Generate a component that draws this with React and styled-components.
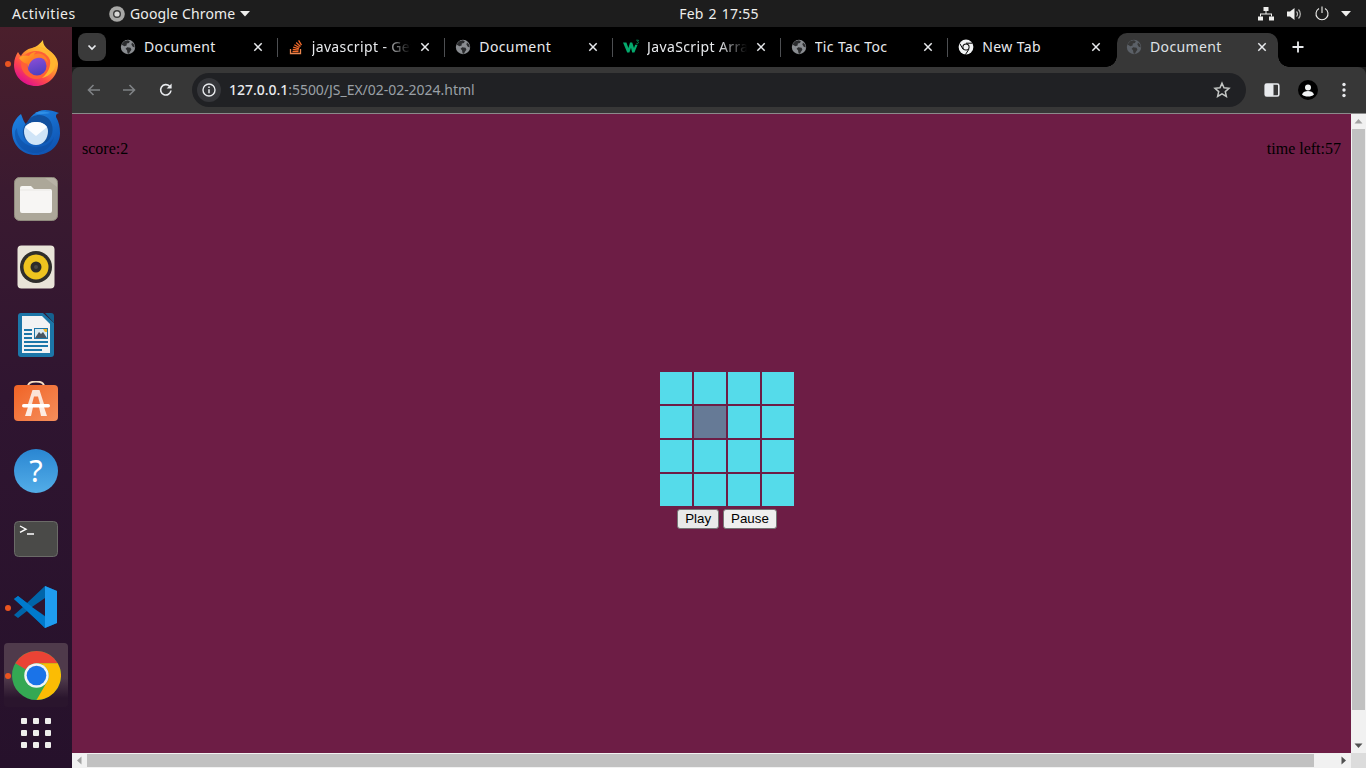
import React from "react";
import styled, { createGlobalStyle } from "styled-components";

const Global = createGlobalStyle`
  html, body { margin: 0; padding: 0; overflow: hidden; background: #1d1d1d; }
  #root { width: 1366px; height: 768px; }
  * { box-sizing: border-box; }
`;

const Screen = styled.div`
  width: 1366px; height: 768px; display: flex; flex-direction: column; overflow: hidden;
  font-family: "Noto Sans", sans-serif;
`;
const TopBar = styled.header`
  height: 27px; flex: none; background: #1d1d1d; color: #eeeeec; display: grid;
  grid-template-columns: 1fr auto 1fr; align-items: center; font-size: 14px; padding: 0 12px;
`;
const TopLeft = styled.div`display: flex; align-items: center;`;
const Activities = styled.span`width: 97px; letter-spacing: .55px;`;
const AppMenu = styled.span`display: flex; align-items: center; gap: 5px; letter-spacing: .15px;`;
const Clock = styled.span`word-spacing: 1px; letter-spacing: .25px; margin-left: 72px;`;
const TopRight = styled.div`display: flex; align-items: center; justify-content: flex-end; gap: 12px; padding-right: 3px;`;
const Body = styled.div`flex: 1; display: flex; min-height: 0;`;
const Dock = styled.nav`
  width: 72px; flex: none; display: flex; flex-direction: column; align-items: center; padding-top: 2px;
  background: linear-gradient(180deg, #4b1f2c 0%, #3a1a30 22%, #2f1530 50%, #26112b 100%);
`;
const DockItem = styled.div`
  position: relative; width: 64px; height: 68px; flex: none; display: flex; align-items: center; justify-content: center;
`;
const ActiveGlow = styled.div`
  position: absolute; inset: 2px 0 2px 0; border-radius: 4px;
  background: linear-gradient(180deg, #4f3a4b 0%, #4f3a4b 55%, #2a152d 86%);
`;
const Dot = styled.i`
  position: absolute; left: 1px; top: 32px; width: 6px; height: 6px; border-radius: 50%; background: #e95420;
`;
const IconWrap = styled.div`position: relative; display: flex;`;
const Apps = styled.div`
  display: grid; grid-template-columns: repeat(3, 6px); gap: 6px; padding-top: 9px;
`;
const AppDot = styled.i`width: 6px; height: 6px; border-radius: 1px; background: #eeeeec;`;
const Chrome = styled.div`flex: 1; min-width: 0; display: flex; flex-direction: column;`;
const TabStrip = styled.div`height: 40px; flex: none; background: #000; display: flex; align-items: flex-start; padding: 6px 0 0 6px;`;
const TabSearch = styled.button`
  width: 28px; height: 28px; border: 0; padding: 0; border-radius: 8px; background: #3a3a3a; margin-right: 4px;
  display: flex; align-items: center; justify-content: center; flex: none;
`;
const Tab = styled.div`
  position: relative; width: 167.67px; height: 34px; flex: none; display: flex; align-items: center;
  padding: 0 ${p => (p.$active ? 16 : 14)}px 6px 10px; gap: 8px; color: ${p => (p.$active ? "#dfe1e5" : "#e8eaed")}; font-size: 14px;
  &::after {
    content: ""; position: absolute; right: 0; top: 5px; width: 1px; height: 19px;
    background: ${p => (p.$sep ? "#4d4f52" : "transparent")};
  }
`;
const ActiveBg = styled.div`
  position: absolute; left: 1px; right: 6px; top: 0; bottom: 0; background: #373737; border-radius: 10px 10px 0 0;
  &::before, &::after { content: ""; position: absolute; bottom: 0; width: 11px; height: 11px; }
  &::before { left: -11px; background: radial-gradient(circle at 0 0, transparent 10.5px, #373737 11px); }
  &::after { right: -11px; background: radial-gradient(circle at 100% 0, transparent 10.5px, #373737 11px); }
`;
const Favicon = styled.span`position: relative; display: flex; width: 16px; height: 16px; flex: none;`;
const TabTitle = styled.span`
  position: relative; flex: 1; min-width: 0; white-space: nowrap; overflow: hidden; letter-spacing: .38px; margin-top: -2px;
  ${p => p.$fade && "-webkit-mask-image: linear-gradient(90deg,#000 72%,transparent 100%); mask-image: linear-gradient(90deg,#000 72%,transparent 100%);"}
`;
const CloseBox = styled.span`position: relative; display: flex; width: 12px; height: 12px; flex: none;`;
const NewTab = styled.span`display: flex; margin: 7px 0 0 7px;`;
const Toolbar = styled.div`
  height: 46px; flex: none; background: #373737; border-radius: 8px 8px 0 0; display: flex; align-items: center;
  padding: 0 0 0 14px;
`;
const NavIcon = styled.span`display: flex; width: 16px; height: 16px; margin-right: ${p => p.$mr}px;`;
const Omnibox = styled.div`
  width: 1054px; height: 34px; flex: none; background: #202124; border-radius: 17px; display: flex; align-items: center;
  padding: 0 15px 0 5px; font-size: 14px; margin-right: 18px;
`;
const InfoChip = styled.span`
  width: 24px; height: 24px; border-radius: 50%; background: #35363a; display: flex; align-items: center; justify-content: center; margin-right: 8px;
`;
const Host = styled.span`color: #e8eaed; font-weight: 500;`;
const Path = styled.span`color: #9aa0a6;`;
const Url = styled.span`flex: 1; letter-spacing: -.03px; margin-top: -2px;`;
const ToolIcons = styled.div`display: flex; align-items: center; gap: 18px;`;
const Page = styled.main`
  flex: 1; min-height: 0; display: grid; grid-template-columns: 1fr 15px; grid-template-rows: 1fr 15px;
  background: #6d1d45; border-top: 1px solid #8b8b8b;
`;
const Content = styled.div`
  min-width: 0; min-height: 0; color: #000; font-family: "Liberation Serif", serif; font-size: 16px; padding: 26px 10px 0;
`;
const Scores = styled.div`display: flex; justify-content: space-between; line-height: 18px; height: 18px;`;
const Game = styled.div`margin: 214px 0 0 578px; width: 134px; display: flex; flex-direction: column; align-items: center;`;
const Board = styled.div`display: grid; grid-template-columns: repeat(4, 32px); grid-auto-rows: 32px; gap: 2px;`;
const Cell = styled.div`background: ${p => (p.$hit ? "#667a96" : "#55dbea")};`;
const Controls = styled.div`display: flex; gap: 4px; margin-top: 3px;`;
const Btn = styled.button`
  height: 20px; padding: 0 7px; background: ${p => (p.$hover ? "#e9e9e9" : "#efefef")}; border: 1px solid #767676; border-radius: 3px;
  font: 13.33px "Liberation Sans", sans-serif; color: #000; line-height: 16px;
`;
const VScroll = styled.div`background: #f1f1f1; display: flex; flex-direction: column; align-items: center;`;
const HScroll = styled.div`background: #f1f1f1; display: flex; align-items: center;`;
const ArrowBox = styled.span`width: 15px; height: 15px; flex: none; display: flex; align-items: center; justify-content: center;`;
const VThumb = styled.div`width: 13px; height: 581px; background: #c1c1c1; flex: none;`;
const HThumb = styled.div`height: 13px; width: 1227px; background: #c1c1c1; flex: none;`;
const Spacer = styled.div`flex: 1;`;
const Corner = styled.div`background: #dcdcdc;`;

const Tri = ({ d, fill = "#505050" }) => (
  <svg width="15" height="15" viewBox="0 0 15 15"><path d={d} fill={fill} /></svg>
);

const Globe = ({ dim }) => (
  <svg width="16" height="16" viewBox="0 0 16 16">
    <circle cx="8" cy="8" r="7.2" fill={dim ? "#5b6067" : "#8a8d91"} />
    <path d="M4.2 2.2 7.8 1.2 9.8 2.2 9 4 6.8 4.6 6.6 6.4 4.4 7.2 1.4 5.4ZM7.2 8.2 10.6 8.8 11.4 10.8 9.8 13 9 14.8 7.6 14.6 7 11.2 5.6 9.8ZM12 3.6 14 5.6 14.8 8.6 12.8 7.8 11.4 5.6Z" fill={dim ? "#373737" : "#2a2b2d"} />
  </svg>
);
const SO = () => (
  <svg width="16" height="16" viewBox="0 0 16 16">
    <path d="M2.5 10v4.5h10V10" fill="none" stroke="#e9854e" strokeWidth="1.3" />
    <path d="M4.5 12.6h6M4.7 10.5l5.9.6M5.2 8.2l5.7 1.6M6.3 5.8l5.2 2.8M8.2 3.5l4.3 3.9M10.6 1.4l2.9 4.7" stroke="#f2692a" strokeWidth="1.3" fill="none" />
  </svg>
);
const W3 = () => (
  <svg width="16" height="16" viewBox="0 0 16 16">
    <path d="M0 3.5h3.4l2 5.6 1.6-5.6h2.2l1.8 5.6 1.2-3.4h2.4L11.4 13.5H9.2L8 8.8 6.4 13.5H4.2Z" fill="#04aa6d" />
    <path d="M13.2 1.2h2.2v.6l-.9.8c.7.1 1 .4 1 .9 0 .6-.5 1-1.2 1-.4 0-.8-.1-1-.3" fill="none" stroke="#04aa6d" strokeWidth=".7" />
  </svg>
);
const ChromeMono = () => (
  <svg width="16" height="16" viewBox="0 0 16 16">
    <circle cx="8" cy="8" r="7.4" fill="#f1f3f4" />
    <path d="M8 4.2h6.4M5 10.2 1.8 4.6M10.8 10.4 7.4 15.6" stroke="#000" strokeWidth="1" />
    <circle cx="8" cy="8" r="3.6" fill="#000" />
    <circle cx="8" cy="8" r="2.6" fill="#f1f3f4" />
  </svg>
);
const X = () => (
  <svg width="12" height="12" viewBox="0 0 12 12"><path d="M2.3 2.3l7.4 7.4M9.7 2.3l-7.4 7.4" stroke="#e8eaed" strokeWidth="1.5" /></svg>
);

const Firefox = () => (
  <svg width="46" height="46" viewBox="0 0 46 46">
    <defs>
      <linearGradient id="ff1" x1=".85" y1=".1" x2=".3" y2=".95">
        <stop offset="0" stopColor="#ffd43a" /><stop offset=".42" stopColor="#ff9a2e" />
        <stop offset=".72" stopColor="#ff4a4a" /><stop offset="1" stopColor="#e31587" />
      </linearGradient>
      <linearGradient id="ff2" x1=".3" y1="0" x2=".6" y2="1">
        <stop offset="0" stopColor="#8f4fd8" /><stop offset="1" stopColor="#4b3fbf" />
      </linearGradient>
      <linearGradient id="ff3" x1="0" y1="0" x2="1" y2="1">
        <stop offset="0" stopColor="#ffb52a" /><stop offset="1" stopColor="#ff6a1f" />
      </linearGradient>
    </defs>
    <path d="M30 0C30 5 33 8 37 11 42 15 45 19 45 24 45 36 35 46 23 46 11 46 1 37 1 25 1 19 3 15 5 12 6 14 7 15 8 16 10 12 14 9 19 8 23 7 27 4 30 0Z" fill="url(#ff1)" />
    <path d="M8 24C8 16 15 11 23 11 31 11 38 17 38 25 38 33 31 39 23 39 15 39 8 32 8 24Z" fill="#ff5f36" />
    <path d="M15 11C21 5 32 8 36 15 39 22 37 32 29 38 38 36 44 28 43 20 40 12 33 7 25 7 21 7 18 8 15 11Z" fill="#ffb52e" />
    <circle cx="24" cy="26" r="9.500" fill="url(#ff2)" />
    <path d="M15 28C13 20 18 14 25 13.500 31 13.500 34.500 18 35 23 32 18.500 28 17 24 18 19 19 16 23 15 28Z" fill="#ff7f2a" />
    <path d="M6 18C9 15 13 15 16 16 17 14 20 12 23 12 21 14 20 15 22 17 18 18 16 20 16 24 12 24 8 21 6 18Z" fill="url(#ff3)" />
  </svg>
);
const Thunderbird = () => (
  <svg width="48" height="47" viewBox="0 0 48 47">
    <defs>
      <linearGradient id="tb1" x1="0" y1="0" x2=".6" y2="1">
        <stop offset="0" stopColor="#1f86e6" /><stop offset="1" stopColor="#0f55b4" />
      </linearGradient>
    </defs>
    <path d="M9 6C11 11 12 15 15 17 17 9 24 2 33 2 38 2 42 3 47 5 44 6 44 7 44 9 47 14 48 19 48 25 48 37 38 47 24 47 10 47 0 37 0 23 0 16 4 10 9 6Z" fill="url(#tb1)" />
    <path d="M5 20C5 30 13 39 25 39 33 39 39 35 42 29 40 39 32 45 23 45 11 45 2 35 3 23Z" fill="#0c4da3" opacity=".55" />
    <path d="M16 13C20 6 31 5 37 11 42 17 42 27 36 33 30 38 19 38 13 31 9 25 11 18 16 13Z" fill="#11509f" />
    <path d="M12 23C12 17 18 14 24 14 30 14 36 17 36 23 36 31 31 37 24 37 17 37 12 31 12 23Z" fill="#cfe4f7" />
    <path d="M13 19C17 15 20 14 24 14 28 14 32 15 35 19L24 28Z" fill="#fbfdff" />
    <path d="M23 5C27 3 33 3 38 5 33 6 27 7 23 5Z" fill="#2f8fe6" />
  </svg>
);
const Files = () => (
  <svg width="44" height="44" viewBox="0 0 44 44">
    <rect x=".5" y=".5" width="43" height="43" rx="5" fill="#aca799" stroke="#8f8a7d" />
    <path d="M31 1 43 10V6a5 5 0 0 0-5-5Z" fill="#b8b3a6" />
    <path d="M6 11a2 2 0 0 1 2-2h9l3 3h16a2 2 0 0 1 2 2v20a2 2 0 0 1-2 2H8a2 2 0 0 1-2-2Z" fill="#f7f6f4" />
    <path d="M6 13h30" stroke="#e3e1dd" strokeWidth=".7" />
  </svg>
);
const Rhythmbox = () => (
  <svg width="38" height="44" viewBox="0 0 38 44">
    <rect x=".5" y=".5" width="37" height="43" rx="4" fill="#e9e4d8" />
    <circle cx="19" cy="22" r="16" fill="#2f2e2b" />
    <circle cx="19" cy="22" r="12.5" fill="#eec41f" />
    <circle cx="19" cy="22" r="5.5" fill="#2d2c29" />
    <circle cx="19" cy="22" r="2" fill="#4a4945" />
  </svg>
);
const Writer = () => (
  <svg width="36" height="44" viewBox="0 0 36 44">
    <path d="M3 0h22l11 10v31a3 3 0 0 1-3 3H3a3 3 0 0 1-3-3V3a3 3 0 0 1 3-3Z" fill="#1c76a8" />
    <path d="M27 0h6a3 3 0 0 1 3 3v7Z" fill="#15608e" />
    <path d="M4 3h20l8 8v29H4Z" fill="#f2f3f4" />
    <path d="M6 16h8v2H6ZM6 20h8v2H6ZM6 24h8v2H6ZM6 28h24v2H6ZM6 32h24v2H6ZM6 36h18v2H6Z" fill="#1c76a8" />
    <rect x="16" y="15" width="14" height="11" fill="#1c76a8" />
    <rect x="17" y="16" width="12" height="9" fill="#dce9ef" />
    <path d="M17 25l4-6 2 2 2-2 4 6Z" fill="#4a5560" />
    <path d="M25 16h4v3h-2Z" fill="#f0b429" />
  </svg>
);
const Store = () => (
  <svg width="46" height="44" viewBox="0 3 46 44">
    <defs>
      <linearGradient id="st" x1="0" y1="0" x2="1" y2="1">
        <stop offset="0" stopColor="#f16325" /><stop offset="1" stopColor="#f58f5c" />
      </linearGradient>
    </defs>
    <path d="M15 8.5C15 5 18 3.500 23 3.500s8 1.500 8 5" fill="none" stroke="#f8dfc4" strokeWidth="1.800" />
    <rect x="1" y="7" width="44" height="36" rx="4" fill="url(#st)" />
    <path d="M19.500 12h7L31 26h-4l-2-7.500h-4L19 26h-4Z" fill="#fbe3d6" />
    <path d="M15 29h5l-2 9h-6ZM26 29h5l3 9h-6Z" fill="#fdece3" />
    <rect x="9" y="26" width="28" height="3.500" rx="1.750" fill="#fff" />
  </svg>
);
const Help = () => (
  <svg width="46" height="46" viewBox="0 0 46 46">
    <defs>
      <linearGradient id="hp" x1="0" y1="0" x2="0" y2="1">
        <stop offset="0" stopColor="#2a86d2" /><stop offset="1" stopColor="#53ade8" />
      </linearGradient>
    </defs>
    <circle cx="23" cy="23" r="22" fill="url(#hp)" />
    <text x="23" y="34" textAnchor="middle" fontFamily="Noto Sans, sans-serif" fontSize="31" fill="#fff">?</text>
  </svg>
);
const Terminal = () => (
  <svg width="44" height="36" viewBox="0 0 44 36">
    <rect x=".5" y=".5" width="43" height="35" rx="4" fill="#4a4a48" stroke="#6b6b68" />
    <path d="M6 5l6 3.2-6 3.2" fill="none" stroke="#fff" strokeWidth="1.4" />
    <path d="M13 13h7" stroke="#fff" strokeWidth="1.5" />
  </svg>
);
const VSCode = () => (
  <svg width="44" height="44" viewBox="0 0 44 44">
    <path d="M31 1 43 6v32l-12 5L13 26 4 33 0 30l9-8-9-8 4-3 9 7Z" fill="#0065a9" />
    <path d="M4 11 0 14l25 23 6 6 3-9Z" fill="#007acc" />
    <path d="M31 1 43 6v32l-12 5Z" fill="#1f9cf0" />
    <path d="M31 13v18L18 22Z" fill="#2f1530" />
  </svg>
);
const ChromeLogo = ({ size = 49 }) => (
  <svg width={size} height={size} viewBox="0 0 48 48">
    <circle cx="24" cy="24" r="24" fill="#34a853" />
    <path d="M24 0a24 24 0 0 1 20.8 12H24a12 12 0 0 0-10.4 6L3.2 12A24 24 0 0 1 24 0Z" fill="#ea4335" />
    <path d="M44.8 12H24a12 12 0 0 1 10.4 18L24 48A24 24 0 0 0 44.8 12Z" fill="#fbbc04" />
    <circle cx="24" cy="24" r="12" fill="#f1f3f4" />
    <circle cx="24" cy="24" r="9.6" fill="#1a73e8" />
  </svg>
);

const dock = [
  { el: <Firefox />, dot: true },
  { el: <Thunderbird /> },
  { el: <Files /> },
  { el: <Rhythmbox /> },
  { el: <Writer /> },
  { el: <Store /> },
  { el: <Help /> },
  { el: <Terminal /> },
  { el: <VSCode />, dot: true },
  { el: <ChromeLogo />, dot: true, active: true },
];

const tabs = [
  { t: "Document", i: <Globe /> },
  { t: "javascript - Get", i: <SO />, fade: true },
  { t: "Document", i: <Globe /> },
  { t: "JavaScript Array", i: <W3 />, fade: true },
  { t: "Tic Tac Toc", i: <Globe /> },
  { t: "New Tab", i: <ChromeMono />, noSep: true },
  { t: "Document", i: <Globe dim />, active: true },
];

export default function App() {
  return (
    <Screen>
      <Global />
      <TopBar>
        <TopLeft>
          <Activities>Activities</Activities>
          <AppMenu>
            <svg width="16" height="16" viewBox="0 0 16 16">
              <circle cx="8" cy="8" r="7.8" fill="#a8a8a6" />
              <circle cx="8" cy="8" r="4" fill="#3a3a3a" />
              <circle cx="8" cy="8" r="2.6" fill="#d8d8d6" />
            </svg>
            Google Chrome
            <svg width="10" height="6" viewBox="0 0 10 6"><path d="M0 0h10L5 5.5Z" fill="#eeeeec" /></svg>
          </AppMenu>
        </TopLeft>
        <Clock>Feb 2  17:55</Clock>
        <TopRight>
          <svg width="16" height="14" viewBox="0 0 16 14" fill="#eeeeec">
            <rect x="5.5" y="0" width="5" height="4" /><rect x="0" y="9.5" width="5" height="4" /><rect x="11" y="9.5" width="5" height="4" />
            <path d="M7.5 4h1v2.5h5.5v3h-1v-2H3v2H2v-3h5.5Z" />
          </svg>
          <svg width="16" height="14" viewBox="0 0 16 14" style={{ marginLeft: 1 }}>
            <path d="M0 4.5h3L7.5 1v12L3 9.5H0Z" fill="#eeeeec" />
            <path d="M9.5 4.5a3.5 3.5 0 0 1 0 5M11.5 2.5a6.5 6.5 0 0 1 0 9" fill="none" stroke="#b9b9b7" strokeWidth="1.2" />
          </svg>
          <svg width="14" height="15" viewBox="0 0 14 15" fill="none" stroke="#eeeeec" strokeWidth="1.1">
            <path d="M7 .5v6.5M4 2.6a6 6 0 1 0 6 0" />
          </svg>
          <svg width="10" height="6" viewBox="0 0 10 6"><path d="M0 0h10L5 5.5Z" fill="#eeeeec" /></svg>
        </TopRight>
      </TopBar>
      <Body>
        <Dock>
          {dock.map((d, i) => (
            <DockItem key={i}>
              {d.active && <ActiveGlow />}
              {d.dot && <Dot />}
              <IconWrap>{d.el}</IconWrap>
            </DockItem>
          ))}
          <Apps>{Array.from({ length: 9 }, (_, i) => <AppDot key={i} />)}</Apps>
        </Dock>
        <Chrome>
          <TabStrip>
            <TabSearch>
              <svg width="12" height="12" viewBox="0 0 12 12"><path d="M2.5 4.5 6 8l3.5-3.5" fill="none" stroke="#e8eaed" strokeWidth="1.7" /></svg>
            </TabSearch>
            {tabs.map((t, i) => (
              <Tab key={i} $active={t.active} $sep={!t.active && !t.noSep}>
                {t.active && <ActiveBg />}
                <Favicon>{t.i}</Favicon>
                <TabTitle $fade={t.fade}>{t.t}</TabTitle>
                <CloseBox><X /></CloseBox>
              </Tab>
            ))}
            <NewTab>
              <svg width="14" height="14" viewBox="0 0 14 14"><path d="M7 1.5v11M1.5 7h11" stroke="#e8eaed" strokeWidth="1.8" /></svg>
            </NewTab>
          </TabStrip>
          <Toolbar>
            <NavIcon $mr={19}>
              <svg width="16" height="16" viewBox="0 0 16 16"><path d="M14 8H3M7.5 3 2.5 8l5 5" fill="none" stroke="#7f8285" strokeWidth="1.6" /></svg>
            </NavIcon>
            <NavIcon $mr={21}>
              <svg width="16" height="16" viewBox="0 0 16 16"><path d="M2 8h11M8.5 3l5 5-5 5" fill="none" stroke="#7f8285" strokeWidth="1.6" /></svg>
            </NavIcon>
            <NavIcon $mr={18}>
              <svg width="16" height="16" viewBox="0 0 16 16"><path d="M13 8.5A5.2 5.2 0 1 1 11.6 4.2" fill="none" stroke="#e8eaed" strokeWidth="1.6" /><path d="M13.6 1.6v5h-5Z" fill="#e8eaed" /></svg>
            </NavIcon>
            <Omnibox>
              <InfoChip>
                <svg width="14" height="14" viewBox="0 0 14 14"><circle cx="7" cy="7" r="6" fill="none" stroke="#e8eaed" strokeWidth="1.4" /><path d="M7 6.2v4M7 3.6v1.4" stroke="#e8eaed" strokeWidth="1.5" /></svg>
              </InfoChip>
              <Url><Host>127.0.0.1</Host><Path>:5500/JS_EX/02-02-2024.html</Path></Url>
              <svg width="18" height="18" viewBox="0 0 18 18"><path d="M9 2.2l2 4.6 5 .5-3.700 3.300 1.100 4.900L9 12.900l-4.400 2.600 1.100-4.900L2 7.300l5-.5Z" fill="none" stroke="#c4c7c5" strokeWidth="1.5" /></svg>
            </Omnibox>
            <ToolIcons>
              <svg width="16" height="16" viewBox="0 0 16 16"><rect x="1.2" y="2" width="13.6" height="12" rx="1.5" fill="none" stroke="#e8eaed" strokeWidth="1.6" /><rect x="1" y="2" width="8.5" height="12" rx="1" fill="#e8eaed" /></svg>
              <svg width="20" height="20" viewBox="0 0 20 20">
                <circle cx="10" cy="10" r="10" fill="#000" />
                <circle cx="10" cy="7.4" r="3" fill="#f1f3f4" />
                <path d="M4 14.5c1-2.6 3.4-3.5 6-3.5s5 .9 6 3.500c-1.400 1.400-3.600 2-6 2s-4.600-.6-6-2Z" fill="#f1f3f4" />
              </svg>
              <svg width="4" height="16" viewBox="0 0 4 16" style={{ marginLeft: 6 }} fill="#e8eaed"><circle cx="2" cy="2.5" r="1.7" /><circle cx="2" cy="8" r="1.7" /><circle cx="2" cy="13.5" r="1.7" /></svg>
            </ToolIcons>
          </Toolbar>
          <Page>
            <Content>
              <Scores><span>score:2</span><span>time left:57</span></Scores>
              <Game>
                <Board>
                  {Array.from({ length: 16 }, (_, i) => <Cell key={i} $hit={i === 5} />)}
                </Board>
                <Controls>
                  <Btn $hover>Play</Btn>
                  <Btn>Pause</Btn>
                </Controls>
              </Game>
            </Content>
            <VScroll>
              <ArrowBox><Tri d="M3.5 9.5h8L7.5 5Z" fill="#a3a3a3" /></ArrowBox>
              <VThumb />
              <Spacer />
              <ArrowBox><Tri d="M3.5 5.5h8L7.5 10Z" /></ArrowBox>
            </VScroll>
            <HScroll>
              <ArrowBox><Tri d="M9.5 3.5v8L5 7.5Z" fill="#a3a3a3" /></ArrowBox>
              <HThumb />
              <Spacer />
              <ArrowBox><Tri d="M5.5 3.5v8L10 7.5Z" /></ArrowBox>
            </HScroll>
            <Corner />
          </Page>
        </Chrome>
      </Body>
    </Screen>
  );
}
